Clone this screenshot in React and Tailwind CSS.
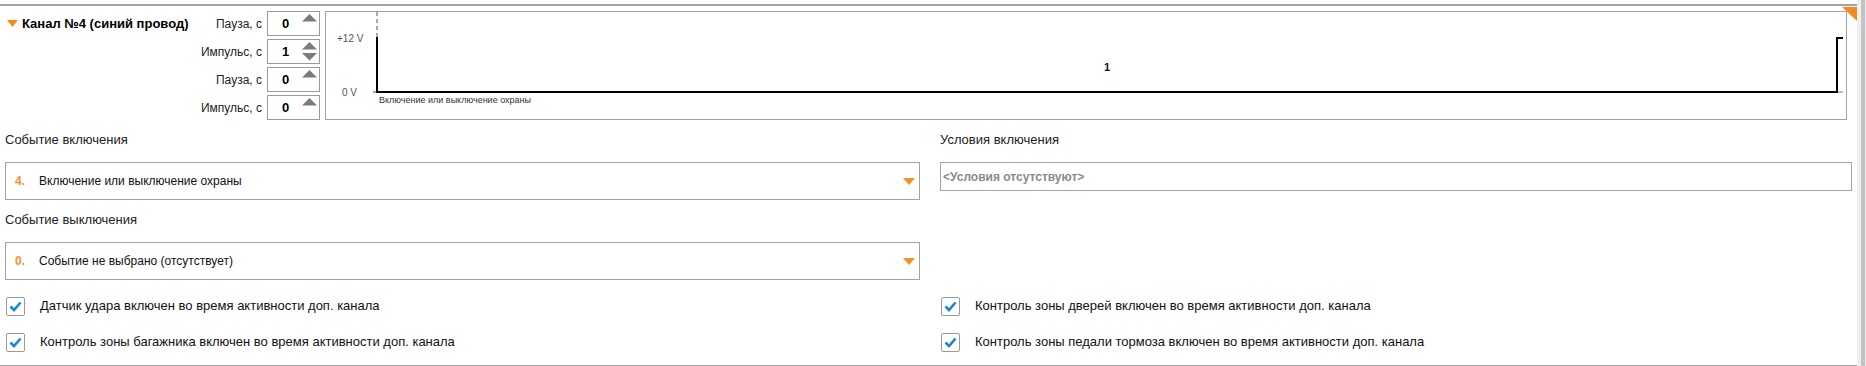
import React from "react";

const font = "font-['Liberation_Sans',Arial,sans-serif]";

const timing = [
	{ label: "Пауза, с", value: 0 },
	{ label: "Импульс, с", value: 1 },
	{ label: "Пауза, с", value: 0 },
	{ label: "Импульс, с", value: 0 },
];

function Arrow({ down }) {
	return (
		<svg width="15" height="8" viewBox="0 0 15 8" className="block">
			{down ? (
				<polygon points="0,0 15,0 7.5,7.5" fill="#7b7b7b" />
			) : (
				<polygon points="7.5,0 15,7.5 0,7.5" fill="#7b7b7b" />
			)}
		</svg>
	);
}

function SpinInput({ value }) {
	return (
		<div className="flex h-[25px] w-[53px] items-stretch border border-[#9a9a9a] bg-white">
			<div className="flex flex-1 items-center pl-[14px] text-[13px] font-bold text-black">
				{value}
			</div>
			<div className="mr-[1px] flex w-[16px] flex-col pt-[2px]">
				<Arrow />
				{value > 0 && (
					<div className="mt-[3px]">
						<Arrow down />
					</div>
				)}
			</div>
		</div>
	);
}

function Chart() {
	return (
		<div className="h-[109px] flex-1 border border-[#a3a3a3] bg-white">
			<svg width="1520" height="107" viewBox="0 0 1520 107" className="block">
				<line x1="51" y1="0" x2="51" y2="25" stroke="#aaaaaa" strokeWidth="2" strokeDasharray="4 3" />
				<line x1="47" y1="80" x2="51" y2="80" stroke="#aaaaaa" strokeWidth="2" />
				<polyline
					points="51,25 51,80 1511,80 1511,26 1517,26"
					fill="none"
					stroke="#000"
					strokeWidth="2"
				/>
				<line x1="1512" y1="80" x2="1517" y2="80" stroke="#bdbdbd" strokeWidth="2" />
				<text x="11" y="29.5" fontSize="10" fill="#555" fontFamily="Liberation Sans, Arial, sans-serif">
					+12 V
				</text>
				<text x="16" y="83.5" fontSize="10" fill="#555" fontFamily="Liberation Sans, Arial, sans-serif">
					0 V
				</text>
				<text x="53" y="91" fontSize="9" fill="#333" fontFamily="Liberation Sans, Arial, sans-serif">
					Включение или выключение охраны
				</text>
				<text
					x="781"
					y="59"
					fontSize="11"
					fontWeight="bold"
					textAnchor="middle"
					fill="#111"
					fontFamily="Liberation Sans, Arial, sans-serif">
					1
				</text>
			</svg>
		</div>
	);
}

function Dropdown({ num, text }) {
	return (
		<div className="flex h-[38px] items-center border border-[#a3a3a3] bg-white pl-[9px] pr-[4px]">
			<span className="w-[24px] text-[12px] font-bold text-[#f39325]">{num}.</span>
			<span className="flex-1 text-[12px] text-[#111]">{text}</span>
			<svg width="12" height="8" viewBox="0 0 12 8" className="mt-[1px]">
				<polygon points="0,0 12,0 6,7" fill="#f39325" />
			</svg>
		</div>
	);
}

function Check({ text }) {
	return (
		<div className="flex h-[20px] items-center pl-[1px]">
			<div className="flex h-[19px] w-[19px] items-center justify-center rounded-[2px] border border-[#9a9a9a] bg-white">
				<svg width="13" height="11" viewBox="0 0 13 11">
					<polyline points="1.5,5.5 5,9 11.5,1.5" fill="none" stroke="#1b87d2" strokeWidth="2.6" />
				</svg>
			</div>
			<span className="ml-[15px] text-[13px] text-[#111]">{text}</span>
		</div>
	);
}

export default function App() {
	return (
		<div className={`flex h-[366px] w-[1866px] bg-white ${font}`}>
			<div className="relative mt-[4px] flex-1 border-t-2 border-b border-[#a3a3a3] px-[5px] pt-[5px]">
				{/* уголок в правом верхнем углу */}
				<svg width="15" height="14" viewBox="0 0 15 14" className="absolute right-0 top-[1px]">
					<polygon points="0,0 15,0 15,14" fill="#f58a1f" />
				</svg>

				<div className="flex pr-[5px]">
					<div className="flex h-[25px] w-[190px] items-center pl-[2px]">
						<svg width="11" height="8" viewBox="0 0 11 8">
							<polygon points="0,0 11,0 5.5,7" fill="#f58a1f" />
						</svg>
						<span className="ml-[4px] text-[13px] font-bold text-black">Канал №4 (синий провод)</span>
					</div>
					<div className="flex w-[67px] flex-col gap-[3px]">
						{timing.map((t, i) => (
							<div key={i} className="flex h-[25px] items-center justify-end text-[12px] text-[#222]">
								{t.label}
							</div>
						))}
					</div>
					<div className="ml-[5px] flex flex-col gap-[3px]">
						{timing.map((t, i) => (
							<SpinInput key={i} value={t.value} />
						))}
					</div>
					<div className="ml-[5px] flex flex-1">
						<Chart />
					</div>
				</div>

				<div className="grid grid-cols-[915px_1fr] gap-x-[20px] pt-[10px]">
					<div>
						<div className="flex h-[20px] items-center text-[13px] text-[#222]">Событие включения</div>
						<div className="mt-[12px]">
							<Dropdown num={4} text="Включение или выключение охраны" />
						</div>
						<div className="mt-[10px] flex h-[20px] items-center text-[13px] text-[#222]">
							Событие выключения
						</div>
						<div className="mt-[12px]">
							<Dropdown num={0} text="Событие не выбрано (отсутствует)" />
						</div>
					</div>
					<div>
						<div className="flex h-[20px] items-center text-[13px] text-[#222]">Условия включения</div>
						<div className="mt-[12px] flex h-[29px] items-center border border-[#a3a3a3] bg-white pl-[2px] text-[12px] font-bold text-[#8a8a8a]">
							&lt;Условия отсутствуют&gt;
						</div>
					</div>
				</div>

				<div className="mt-[16px] grid grid-cols-[915px_1fr] gap-x-[20px] gap-y-[16px]">
					<Check text="Датчик удара включен во время активности доп. канала" />
					<Check text="Контроль зоны дверей включен во время активности доп. канала" />
					<Check text="Контроль зоны багажника включен во время активности доп. канала" />
					<Check text="Контроль зоны педали тормоза включен во время активности доп. канала" />
				</div>
			</div>
			<div className="flex w-[9px] bg-[#f0f0f0]">
				<div className="ml-[4px] w-[4px] bg-[#c3c3c3]" />
			</div>
		</div>
	);
}
